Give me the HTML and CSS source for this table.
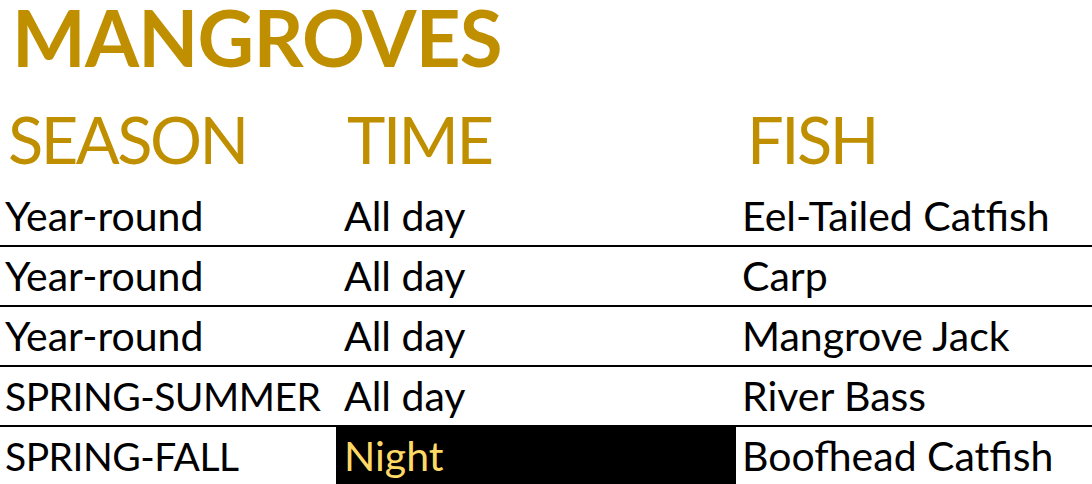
FILE: index.html
```html
<!DOCTYPE html>
<html>
<head>
<meta charset="utf-8">
<link rel="stylesheet" href="styles.css">
</head>
<body>
<div class="sheet">
  <h1 class="title">MANGROVES</h1>
  <div class="row head">
    <div class="cell c1">SEASON</div>
    <div class="cell c2">TIME</div>
    <div class="cell c3">FISH</div>
  </div>
  <div class="row body">
    <div class="cell c1">Year-round</div>
    <div class="cell c2">All day</div>
    <div class="cell c3">Eel-Tailed Catfish</div>
  </div>
  <div class="row body">
    <div class="cell c1">Year-round</div>
    <div class="cell c2">All day</div>
    <div class="cell c3">Carp</div>
  </div>
  <div class="row body">
    <div class="cell c1">Year-round</div>
    <div class="cell c2">All day</div>
    <div class="cell c3">Mangrove Jack</div>
  </div>
  <div class="row body">
    <div class="cell c1 caps">SPRING-SUMMER</div>
    <div class="cell c2">All day</div>
    <div class="cell c3">River Bass</div>
  </div>
  <div class="row body last">
    <div class="cell c1 caps">SPRING-FALL</div>
    <div class="cell c2 night">Night</div>
    <div class="cell c3">Boofhead Catfish</div>
  </div>
</div>
</body>
</html>
```
FILE: styles.css
```css
html, body {
  margin: 0;
  padding: 0;
  background: #ffffff;
}
.sheet {
  width: 1092px;
  font-family: Lato, "Open Sans", sans-serif;
  color: #000000;
}
.title {
  margin: -10px 0 -10px 0;
  padding-left: 12px;
  font-size: 78px;
  line-height: 94px;
  font-weight: 700;
  letter-spacing: -0.8px;
  color: #bf8f00;
}
.row {
  display: flex;
}
.cell {
  white-space: nowrap;
  overflow: hidden;
}
.c1 { width: 336px; padding-left: 5px; box-sizing: border-box; }
.c2 { width: 400px; padding-left: 8px; box-sizing: border-box; }
.c3 { width: 356px; padding-left: 6px; box-sizing: border-box; }
.head {
  color: #bf8f00;
  font-size: 65px;
  letter-spacing: -2.5px;
  padding-top: 17px;
  line-height: 96px;
}
.head .c1 { padding-left: 8px; }
.head .c2 { padding-left: 11px; }
.head .c3 { padding-left: 11px; }
.body {
  font-size: 41px;
  height: 58px;
  line-height: 58px;
  border-bottom: 2px solid #000000;
}
.body .caps {
  font-size: 39px;
  letter-spacing: -0.5px;
}
.body.last {
  border-bottom: none;
  height: 57px;
}
.night {
  background: #000000;
  color: #ffd966;
}
```
